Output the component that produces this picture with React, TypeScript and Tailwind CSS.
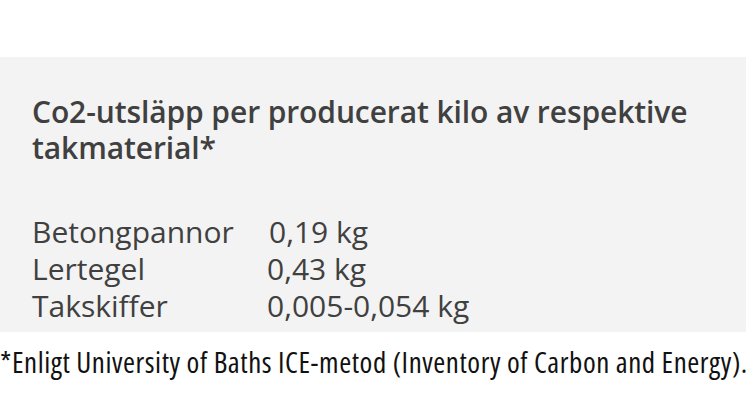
export default function App() {
  const rows = [
    { name: 'Betongpannor', value: '0,19 kg', shift: 'pl-[2px]' },
    { name: 'Lertegel', value: '0,43 kg', shift: '' },
    { name: 'Takskiffer', value: '0,005-0,054 kg', shift: '' },
  ]

  return (
    <div className="w-[746px] h-[419px] bg-white overflow-hidden">
      <div className="h-[57px]" />
      <div className="bg-[#f3f3f3] h-[275px] pl-[32px] pt-[37px] text-[#404040] font-['Open_Sans',sans-serif]">
        <h2 className="text-[30px] leading-[36px] font-semibold tracking-[-0.1px]">
          Co2-utsläpp per producerat kilo av respektive
          <br />
          takmaterial*
        </h2>
        <div className="mt-[47px] flex flex-col">
          {rows.map((row) => (
            <div key={row.name} className="flex text-[30px] leading-[37px]">
              <div className="w-[235px]">{row.name}</div>
              <div className={row.shift}>{row.value}</div>
            </div>
          ))}
        </div>
      </div>
      <p className="mt-[15px] whitespace-nowrap text-[29px] leading-[30px] tracking-[0.55px] text-[#111] font-['Open_Sans',sans-serif] [font-stretch:75%]">
        *Enligt University of Baths ICE-metod (Inventory of Carbon and Energy).
      </p>
    </div>
  )
}
